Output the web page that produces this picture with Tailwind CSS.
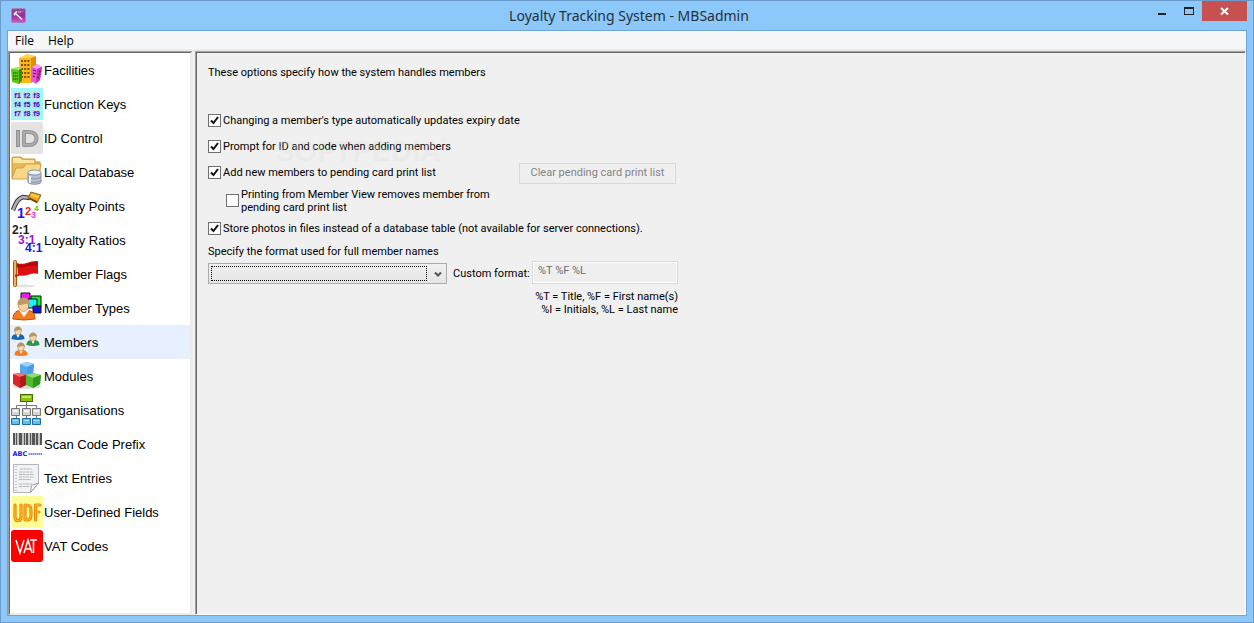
<!DOCTYPE html>
<html lang="en">
<head>
<meta charset="utf-8">
<meta name="viewport" content="width=device-width, initial-scale=1">
<title>Loyalty Tracking System - MBSadmin</title>
<script src="https://cdn.jsdelivr.net/npm/@tailwindcss/browser@4"></script>
</head>
<body>
<div class="flex min-h-screen flex-col border border-[#6b9bc8] bg-[#8cc8fa] font-['Roboto',sans-serif] text-[11px] text-black">
  <header class="grid h-[29px] shrink-0 grid-cols-[1fr_auto_1fr] items-start pr-1.5 pl-2.5">
    <svg class="mt-[7px] size-[15px]" viewBox="0 0 15 15" aria-hidden="true">
      <defs><linearGradient id="app" x1="0" y1="0" x2="0" y2="1"><stop offset="0" stop-color="#8d4f96"/><stop offset=".5" stop-color="#9a2f9c"/><stop offset="1" stop-color="#d94fd0"/></linearGradient></defs>
      <rect x=".5" y=".5" width="14" height="14" rx="1.5" fill="url(#app)" stroke="#a887b4"/>
      <path d="M3.500 7.500v-2l2.500-2M4.500 5.500l6.500 6" fill="none" stroke="#fff" stroke-width="1.500"/>
      <path d="M7 4h3M11 3v1" stroke="#e6b9e6" stroke-width="1"/>
    </svg>
    <h1 class="font-['Noto_Sans',sans-serif] text-[14px] leading-[29px] text-[#26303a]">Loyalty Tracking System - MBSadmin</h1>
    <div class="flex justify-end">
      <button type="button" aria-label="Minimize" class="flex h-5 w-[26px] items-center justify-center"><svg class="h-5 w-[26px]" viewBox="0 0 26 20"><path d="M8 12h8v2H8z" fill="#222"/></svg></button>
      <button type="button" aria-label="Maximize" class="flex h-5 w-[26px] items-center justify-center"><svg class="h-5 w-[26px]" viewBox="0 0 26 20"><path fill-rule="evenodd" d="M8 6h10v8H8zM9 8v5h8V8z" fill="#222"/></svg></button>
      <button type="button" aria-label="Close" class="flex h-5 w-[45px] items-center justify-center bg-[#c75050]"><svg class="h-5 w-[45px]" viewBox="0 0 45 20"><path d="m19 7 7 6.500M26 7l-7 6.500" stroke="#fff" stroke-width="1.900"/></svg></button>
    </div>
  </header>

  <div class="mx-1.5 mb-1.5 flex flex-1 flex-col border border-[#6fa5d4] bg-[#f0f0f0]">
    <nav aria-label="Menu bar" class="flex h-[20px] shrink-0 items-center gap-3.5 border-b-2 border-[#ebebec] bg-[#f5f6f7] pt-0.5 pl-[7px] font-['Open_Sans',sans-serif] text-[12px] leading-4">
      <button type="button">File</button>
      <button type="button">Help</button>
    </nav>

    <div class="flex flex-1">
      <aside class="flex w-[184px] shrink-0 border-t border-l border-[#a0a0a0]">
        <ul class="flex-1 border-t border-r-2 border-b-2 border-l border-t-[#696969] border-r-[#ececec] border-b-[#ececec] border-l-[#696969] bg-white font-['Liberation_Sans',sans-serif] text-[13px]">
          <li><a href="#facilities" class="flex h-[34px] items-center gap-px pl-px">
            <svg class="size-8 shrink-0" viewBox="0 0 32 32" aria-hidden="true">
              <path d="m8 4 8-4 9 2-5 2z" fill="#ffd34a"/><path d="M8 4h12v25H9z" fill="#ffb51c"/><path d="m20 4 5-2v23l-5 4z" fill="#e58e00"/>
              <path d="M10 7h9M10 11h9M10 15h9M10 19h9M10 23h9" stroke="#7c5200" stroke-width="2" stroke-dasharray="2 1.200"/>
              <path d="m0 15 7-2 4 1v12l-3 4-7-2z" fill="#5dc51b"/><path d="m0 15 7-2 4 1-3 2z" fill="#a7ee62"/><path d="m8 16 3-2v12l-3 4z" fill="#329100"/>
              <path d="M2 19h5M2 22h5M2 25h5" stroke="#176400" stroke-width="1.600" stroke-dasharray="1.300 .8"/>
              <path d="m21 13 5-3 5 3-2 13-4 4-5-3z" fill="#e65bd6"/><path d="m21 13 5-3 5 3-5 2z" fill="#ff9df5"/><path d="m26 15 5-2-2 13-4 3z" fill="#c32fb4"/>
              <path d="m22 16 3 1m-3 2 3 1m-3 2 2 1m4-5 2-1m-3 4 2-1m-3 4 2-1" stroke="#7d0d75" stroke-width="1.300"/>
            </svg><span class="pt-0.5">Facilities</span></a></li>
          <li><a href="#keys" class="flex h-[34px] items-center gap-px pl-px">
            <svg class="size-8 shrink-0" viewBox="0 0 32 32" aria-hidden="true">
              <rect width="32" height="32" fill="#9df7ff"/>
              <path d="M3 4h7v7H3zm9 0h7v7h-7zm9 0h7v7h-7zM3 13h7v7H3zm9 0h7v7h-7zm9 0h7v7h-7zM3 22h7v7H3zm9 0h7v7h-7zm9 0h7v7h-7z" fill="#ccd4d8"/>
              <g font-family="Liberation Sans" font-size="7.500" font-weight="bold" fill="#1a1ae0" text-anchor="middle"><text x="6.500" y="10">f1</text><text x="16" y="10">f2</text><text x="25.500" y="10">f3</text><text x="6.500" y="19">f4</text><text x="16" y="19">f5</text><text x="25.500" y="19">f6</text><text x="6.500" y="28">f7</text><text x="16" y="28">f8</text><text x="25.500" y="28">f9</text></g>
            </svg><span class="pt-0.5">Function Keys</span></a></li>
          <li><a href="#id" class="flex h-[34px] items-center gap-px pl-px">
            <svg class="size-8 shrink-0" viewBox="0 0 32 32" aria-hidden="true">
              <rect width="32" height="32" rx="2" fill="#e3e3e3"/>
              <g fill="none" stroke-linejoin="round"><path d="M7 8v17M13 10h5c10 0 10 13 0 13h-5z" stroke="#8c8c8c" stroke-width="4"/><path d="M7 9v15M13 10h5c10 0 10 13 0 13h-5z" stroke="#ababab" stroke-width="2.500"/></g>
            </svg><span class="pt-0.5">ID Control</span></a></li>
          <li><a href="#database" class="flex h-[34px] items-center gap-px pl-px">
            <svg class="size-8 shrink-0" viewBox="0 0 32 32" aria-hidden="true">
              <path d="M1 22V2l1-1h8l2 2h12v3h5v15z" fill="#e9b955" stroke="#c8953a"/><path d="M2 2h7l2 2h12v3H2z" fill="#fbe4a0"/>
              <path d="m1 23 4-11h7l3-4h15l-3 15z" fill="#fad88a" stroke="#d2a149"/>
              <path d="M17 17v9c0 3 13 3 13 0v-9z" fill="#b6c0cd" stroke="#8794a5"/><ellipse cx="23.500" cy="16.500" rx="6.500" ry="2.500" fill="#eef3f8" stroke="#8794a5"/>
              <path d="M17 20.500c0 3 13 3 13 0M17 24c0 3 13 3 13 0" fill="none" stroke="#8794a5"/><path d="M19 20v7" stroke="#eef3f8" stroke-width="2"/>
            </svg><span class="pt-0.5">Local Database</span></a></li>
          <li><a href="#points" class="flex h-[34px] items-center gap-px pl-px">
            <svg class="size-8 shrink-0" viewBox="0 0 32 32" aria-hidden="true">
              <path d="M2 20C5 13 6 9 12 7l7 1" fill="none" stroke="#333" stroke-width="4.500"/><path d="M2 20C5 13 6 9 12 7l7 1" fill="none" stroke="#b0b0b0" stroke-width="2.600"/>
              <path d="m20 2 10 3-4 8-9-5z" fill="#f5a90c" stroke="#6d4a10" stroke-width=".8"/><path d="m21 4 7 2-1 2-7-2z" fill="#ffce53"/><path d="m18 8 8 4" stroke="#6d4a10" stroke-width="1.500"/>
              <g font-family="Liberation Sans" font-weight="bold"><text x="6" y="28" font-size="14" fill="#1515ff">1</text><text x="14" y="25" font-size="11" fill="#ff1818">2</text><text x="20" y="28" font-size="9" fill="#f03af0">3</text><text x="23" y="21" font-size="8" fill="#18e018">4</text></g>
            </svg><span class="pt-0.5">Loyalty Points</span></a></li>
          <li><a href="#ratios" class="flex h-[34px] items-center gap-px pl-px">
            <svg class="size-8 shrink-0" viewBox="0 0 32 32" aria-hidden="true">
              <g font-family="Liberation Sans" font-weight="bold" font-size="12"><text x="1" y="10" fill="#222">2:1</text><text x="7" y="20" fill="#9818cf">3:1</text><text x="14" y="28" fill="#1515f5">4:1</text></g>
            </svg><span class="pt-0.5">Loyalty Ratios</span></a></li>
          <li><a href="#flags" class="flex h-[34px] items-center gap-px pl-px">
            <svg class="size-8 shrink-0" viewBox="0 0 32 32" aria-hidden="true">
              <ellipse cx="13" cy="28" rx="11" ry="1.500" fill="#e2e2e2"/><rect x="2.500" y="2.500" width="3" height="26" rx="1" fill="#f5b35c" stroke="#a05a14"/>
              <path d="M6 5c8 3 12-3 21-2v13c-8-2-13 4-20 1z" fill="#dc1010"/><path d="M6 6c8 3 12-3 20-2v4C17 6 13 11 6 9z" fill="#b30606"/><path d="M4 17h4l-4 1.500" stroke="#c00" fill="none"/>
            </svg><span class="pt-0.5">Member Flags</span></a></li>
          <li><a href="#types" class="flex h-[34px] items-center gap-px pl-px">
            <svg class="size-8 shrink-0" viewBox="0 0 32 32" aria-hidden="true">
              <g stroke="#111"><path d="M10 1h9v9h-9z" fill="#ff16ff"/><path d="M20 4h10v11H20z" fill="#16ef28"/><path d="M17 7h9v9h-9z" fill="#16f5ff"/><path d="M22 14h8v7h-8z" fill="#1616d8"/></g>
              <path d="M2 27c0-7 4-9 11-9s11 2 11 9q-11 2-22 0z" fill="#f47b20" stroke="#cf4e08"/><path d="m8 18 5 7 5-7z" fill="#fff"/>
              <ellipse cx="12.500" cy="13.500" rx="5" ry="6" fill="#f5d3a0" stroke="#b08a58" stroke-width=".7"/><path d="M6.500 13c-1-9 13-10 12.500 0-3-3-6 0-12.500 0z" fill="#c09a66"/>
            </svg><span class="pt-0.5">Member Types</span></a></li>
          <li><a href="#members" aria-current="page" class="flex h-[34px] items-center gap-px bg-[#e6f0ff] pl-px">
            <svg class="size-8 shrink-0" viewBox="0 0 32 32" aria-hidden="true">
              <defs><g id="person"><path d="M.5 13C.5 9 3 8 7 8s6.500 1 6.500 5q-6.500 2-13 0z"/><path d="m5 8 2 4 2-4z" fill="#fff"/><ellipse cx="7" cy="5" rx="3.300" ry="4" fill="#f5d8ad" stroke="#a37b48" stroke-width=".5"/><path d="M3 5C3-1 11-1 11 5 9 3 7 5 3 5z" fill="#b9975f"/></g></defs>
              <use href="#person" fill="#1767b4"/><use href="#person" x="15" y="6" fill="#31924c"/><use href="#person" x="3" y="16" fill="#f57a20"/>
            </svg><span class="pt-0.5">Members</span></a></li>
          <li><a href="#modules" class="flex h-[34px] items-center gap-px pl-px">
            <svg class="size-8 shrink-0" viewBox="0 0 32 32" aria-hidden="true">
              <ellipse cx="16" cy="26" rx="14" ry="3" fill="#d4ded2"/>
              <path d="m9 4 7-2 7 2-1 10-6 3-7-3z" fill="#56a8ec"/><path d="m9 4 7-2 7 2-7 3z" fill="#9bd0ff"/><path d="m16 7 7-3-1 10-6 3z" fill="#4a9de0"/>
              <path d="m2 14 7-1 6 2v10l-6 3-7-4z" fill="#d92727"/><path d="m2 14 7-1 6 2-6 2z" fill="#f77272"/><path d="m9 17 6-2v10l-6 3z" fill="#b8151c"/>
              <path d="m15 15 7-2 8 2-1 9-7 4-7-3z" fill="#53b832"/><path d="m15 15 7-2 8 2-8 3z" fill="#91dc75"/><path d="m22 18 8-3-1 9-7 4z" fill="#2f971f"/>
            </svg><span class="pt-0.5">Modules</span></a></li>
          <li><a href="#organisations" class="flex h-[34px] items-center gap-px pl-px">
            <svg class="size-8 shrink-0" viewBox="0 0 32 32" aria-hidden="true">
              <path d="M15.500 8v17M5.500 25V11.500h20V25" fill="none" stroke="#777"/>
              <rect x="9.500" y=".5" width="12" height="7" fill="#8bc400" stroke="#466d00"/><path d="M11 2h9v2h-9z" fill="#c5e66f"/>
              <g fill="#d5d5d5" stroke="#777"><path d="M.5 14.500h8v7h-8zM11.500 14.500h8v7h-8zM21.500 14.500h8v7h-8z"/></g>
              <g fill="#61bdf0" stroke="#1c6fa3"><path d="M.5 24.500h8v6h-8zM11.500 24.500h8v6h-8zM21.500 24.500h8v6h-8z"/></g>
              <path d="M2 17h5M13 17h5M23 17h5" stroke="#f4f4f4" stroke-width="2"/><path d="M2 26.500h5M13 26.500h5M23 26.500h5" stroke="#a9e1ff"/>
            </svg><span class="pt-0.5">Organisations</span></a></li>
          <li><a href="#scan" class="flex h-[34px] items-center gap-px pl-px">
            <svg class="size-8 shrink-0" viewBox="0 0 32 32" aria-hidden="true">
              <path d="M2 5h29v12H2z" fill="#c4c4c4"/><path d="M2 5h2v12H2zm3 0h1v12H5zm3 0h3v12H8zm5 0h1v12h-1zm2 0h2v12h-2zm4 0h1v12h-1zm2 0h3v12h-3zm4 0h2v12h-2zm4 0h2v12h-2z" fill="#555"/>
              <text x="1.500" y="28" font-family="DejaVu Sans" font-size="6.500" font-weight="bold" fill="#2020e0">ABC</text><path d="M17.500 26h13.500" stroke="#5555ee" stroke-width="1.500" stroke-dasharray="1.500 .5"/>
            </svg><span class="pt-0.5">Scan Code Prefix</span></a></li>
          <li><a href="#text" class="flex h-[34px] items-center gap-px pl-px">
            <svg class="size-8 shrink-0" viewBox="0 0 32 32" aria-hidden="true">
              <path d="M2.500 2.500h25V21l-8 9.500h-17z" fill="#f1f2f3" stroke="#b3b5b8"/><path d="M5 4v25" stroke="#999" stroke-dasharray="1 2"/>
              <path d="M9 7h12M8 10h14M8 12.500h15M8 15h15M8 17.500h12M8 22h13M8 24.500h11" stroke="#b4b6b9" stroke-dasharray="3 .6"/>
              <path d="m19.500 30.500 1-7 7-2.500z" fill="#fff" stroke="#9c9c9c"/>
            </svg><span class="pt-0.5">Text Entries</span></a></li>
          <li><a href="#udf" class="flex h-[34px] items-center gap-px pl-px">
            <svg class="size-8 shrink-0" viewBox="0 0 32 32" aria-hidden="true">
              <rect width="32" height="32" rx="2" fill="#ffff96"/>
              <g fill="none" stroke-linejoin="round" stroke-linecap="round"><path d="M4 9v12c0 5 6 5 6 0V9M14 9v15c6 0 6-1 6-7s0-8-6-8zM24.500 24V9H29m-4.500 7H28" stroke="#ea820c" stroke-width="3.200"/><path d="M4 9v12c0 5 6 5 6 0V9M14 9v15c6 0 6-1 6-7s0-8-6-8zM24.500 24V9H29m-4.500 7H28" stroke="#ffb619" stroke-width="1.300"/></g>
            </svg><span class="pt-0.5">User-Defined Fields</span></a></li>
          <li><a href="#vat" class="flex h-[34px] items-center gap-px pl-px">
            <svg class="size-8 shrink-0" viewBox="0 0 32 32" aria-hidden="true">
              <rect width="32" height="32" rx="3" fill="#fe0000"/><path d="m5 10 4 13 4-13m0 13 4-13 4 13m-7-4h6m-1-9h7m-3.500 0v13" fill="none" stroke="#fff" stroke-width="1.500"/>
            </svg><span class="pt-0.5">VAT Codes</span></a></li>
        </ul>
      </aside>

      <div class="ml-[3px] flex flex-1 border-t border-r border-b border-l border-t-[#a0a0a0] border-r-white border-b-white border-l-[#a0a0a0]">
        <main class="flex-1 border-t border-l border-[#696969] pt-3 pl-[11px]">
          <p class="leading-4">These options specify how the system handles members</p>
          <form class="mt-[27px] w-[470px]">
            <div class="mb-px flex h-[25px] items-center gap-0.5">
              <span class="grid size-[13px] shrink-0"><input id="expiry" type="checkbox" checked class="peer col-start-1 row-start-1 size-[13px] appearance-none border border-[#707070] bg-white"><svg class="pointer-events-none invisible col-start-1 row-start-1 size-[13px] peer-checked:visible" viewBox="0 0 13 13"><path d="m3 6.500 2.500 2.500 4.500-6" fill="none" stroke="#111" stroke-width="2"/></svg></span>
              <label for="expiry" class="pt-0.5">Changing a member's type automatically updates expiry date</label>
            </div>
            <div class="relative mb-px flex h-[25px] items-center gap-0.5">
              <span class="grid size-[13px] shrink-0"><input id="prompt" type="checkbox" checked class="peer col-start-1 row-start-1 size-[13px] appearance-none border border-[#707070] bg-white"><svg class="pointer-events-none invisible col-start-1 row-start-1 size-[13px] peer-checked:visible" viewBox="0 0 13 13"><path d="m3 6.500 2.500 2.500 4.500-6" fill="none" stroke="#111" stroke-width="2"/></svg></span>
              <label for="prompt" class="pt-0.5">Prompt for ID and code when adding members</label>
              <span class="pointer-events-none absolute top-0 left-[66px] flex font-['Liberation_Sans',sans-serif] text-[29px] leading-8 font-bold text-[#f3f3f3]/25 [text-shadow:1px_1px_1px_rgb(0_0_0/0.03)]" aria-hidden="true">SOFTPEDIA<span class="text-[9px] leading-3">®</span></span>
            </div>
            <div class="flex h-[25px] items-center gap-0.5">
              <span class="grid size-[13px] shrink-0"><input id="pending" type="checkbox" checked class="peer col-start-1 row-start-1 size-[13px] appearance-none border border-[#707070] bg-white"><svg class="pointer-events-none invisible col-start-1 row-start-1 size-[13px] peer-checked:visible" viewBox="0 0 13 13"><path d="m3 6.500 2.500 2.500 4.500-6" fill="none" stroke="#111" stroke-width="2"/></svg></span>
              <label for="pending" class="pt-0.5">Add new members to pending card print list</label>
              <button type="button" disabled class="mt-0.5 mr-0.5 ml-auto h-[21px] w-[157px] border border-[#d9d9d9] bg-[#efefef] text-[#838383]">Clear pending card print list</button>
            </div>
            <div class="my-[3px] flex h-[25px] items-center gap-0.5 pl-[18px]">
              <input id="remove" type="checkbox" class="size-[13px] shrink-0 appearance-none border border-[#707070] bg-white checked:bg-[#444]">
              <label for="remove" class="leading-[13px]">Printing from Member View removes member from<br>pending card print list</label>
            </div>
            <div class="flex h-[25px] items-center gap-0.5">
              <span class="grid size-[13px] shrink-0"><input id="photos" type="checkbox" checked class="peer col-start-1 row-start-1 size-[13px] appearance-none border border-[#707070] bg-white"><svg class="pointer-events-none invisible col-start-1 row-start-1 size-[13px] peer-checked:visible" viewBox="0 0 13 13"><path d="m3 6.500 2.500 2.500 4.500-6" fill="none" stroke="#111" stroke-width="2"/></svg></span>
              <label for="photos" class="pt-0.5 whitespace-nowrap">Store photos in files instead of a database table (not available for server connections).</label>
            </div>
            <label for="format" class="mt-[3px] block leading-4">Specify the format used for full member names</label>
            <div class="mt-px flex items-end">
              <div class="grid h-[21px] w-[239px] shrink-0 border border-[#acacac] bg-linear-to-b from-[#f0f0f0] to-[#e5e5e5]">
                <select id="format" class="col-start-1 row-start-1 m-0.5 mr-[19px] h-[15px] appearance-none border border-dotted border-black leading-none"><option></option></select>
                <svg class="pointer-events-none col-start-1 row-start-1 mr-1 h-2 w-2 self-center justify-self-end" viewBox="0 0 8 8"><path d="m1 2.500 3 3 3-3" fill="none" stroke="#555" stroke-width="2"/></svg>
              </div>
              <label for="custom" class="ml-1.5 leading-[21px] whitespace-nowrap">Custom format:</label>
              <input id="custom" type="text" disabled value="%T %F %L" class="ml-auto h-[23px] w-[146px] border border-[#d9d9d9] bg-[#efefef] px-[5px] pb-1 text-[#6d6d6d] shadow-[inset_0_0_0_1px_#fff]">
            </div>
            <p class="mt-1.5 text-right leading-[13px]">%T = Title, %F = First name(s)<br>%I = Initials, %L = Last name</p>
          </form>
        </main>
      </div>
    </div>
  </div>
</div>
</body>
</html>
